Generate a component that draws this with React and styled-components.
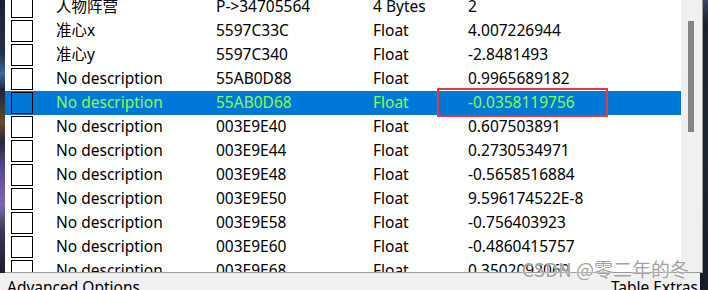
import React from "react";
import styled, { createGlobalStyle } from "styled-components";

const FONT = `"Noto Sans", "Noto Sans CJK SC", sans-serif`;

const Global = createGlobalStyle`
  html, body { margin: 0; padding: 0; background: #1b2232; }
  body { width: 708px; height: 290px; overflow: hidden; }
  #root { width: 708px; height: 290px; }
`;

const Screen = styled.div`
  position: relative;
  width: 708px;
  height: 290px;
  overflow: hidden;
  display: flex;
  font-family: ${FONT};
  background: linear-gradient(180deg, #2a3650 0%, #151c2a 30%, #1e2738 60%, #121826 100%);
`;

const Main = styled.div`
  width: 703px;
  display: flex;
  flex-direction: column;
`;

const TopRow = styled.div`
  height: 273px;
  display: flex;
`;

const LeftDesk = styled.div`
  width: 5px;
  background: linear-gradient(
    180deg,
    #1a2030 0%,
    #22324c 20%,
    #3d6a98 27%,
    #1c2436 33%,
    #6a4a30 45%,
    #2a2440 52%,
    #5b4b8c 62%,
    #7a6aa8 75%,
    #3a3458 85%,
    #1a1e2c 100%
  );
`;

const ListFrame = styled.div`
  width: 698px;
  display: flex;
  background: #fff;
  border-right: 1px solid #9a9a9a;
  border-bottom: 1px solid #9a9a9a;
  box-sizing: border-box;
  overflow: hidden;
`;

const Viewport = styled.div`
  width: 676px;
  overflow: hidden;
`;

const Rows = styled.div`
  margin-top: -5px;
`;

const Row = styled.div`
  position: relative;
  display: grid;
  grid-template-columns: 51px 160px 157px 95px 1fr;
  height: 24px;
  font-size: 15.5px;
  line-height: 22px;
  background: ${(p) => (p.$selected ? "#0078d7" : "transparent")};
  color: ${(p) => (p.$selected ? "#86ff48" : "#000")};
`;

const Check = styled.span`
  display: block;
  width: 22px;
  height: 22px;
  margin: 1px 0 0 6px;
  box-sizing: border-box;
  border: 1px solid #000;
`;

const Cell = styled.span`
  white-space: nowrap;
`;

const Callout = styled.span`
  position: absolute;
  left: 432px;
  top: -3px;
  width: 171px;
  height: 29px;
  box-sizing: border-box;
  border: 2px solid #e8383d;
  pointer-events: none;
`;

const Scrollbar = styled.div`
  width: 21px;
  background: #f0f0f0;
  padding: 21px 0 0 7px;
  box-sizing: border-box;
`;

const Thumb = styled.div`
  width: 6px;
  height: 111px;
  background: #858585;
`;

const BottomBar = styled.div`
  width: 700px;
  height: 17px;
  background: #f0f0f0;
  display: flex;
  justify-content: space-between;
  padding: 3px 2px 0 7px;
  box-sizing: border-box;
  overflow: hidden;
  font-size: 15.5px;
  line-height: 22px;
  color: #000;
  white-space: nowrap;
`;

const RightDesk = styled.div`
  flex: 1;
  background: linear-gradient(180deg, #3a4660 0%, #1a2232 8%, #1c2536 50%, #161d2b 100%);
`;

const Watermark = styled.div`
  position: absolute;
  left: 522px;
  top: 256px;
  font-family: "Noto Sans CJK SC", "Noto Sans", sans-serif;
  font-size: 19px;
  line-height: 26px;
  color: rgba(130, 130, 130, 0.75);
  text-shadow: 0 0 2px rgba(255, 255, 255, 0.9), 0 0 1px rgba(255, 255, 255, 0.9);
  white-space: nowrap;
  pointer-events: none;
`;

const rows = [
  ["人物阵营", "P->34705564", "4 Bytes", "2"],
  ["准心x", "5597C33C", "Float", "4.007226944"],
  ["准心y", "5597C340", "Float", "-2.8481493"],
  ["No description", "55AB0D88", "Float", "0.9965689182"],
  ["No description", "55AB0D68", "Float", "-0.0358119756", true],
  ["No description", "003E9E40", "Float", "0.607503891"],
  ["No description", "003E9E44", "Float", "0.2730534971"],
  ["No description", "003E9E48", "Float", "-0.5658516884"],
  ["No description", "003E9E50", "Float", "9.596174522E-8"],
  ["No description", "003E9E58", "Float", "-0.756403923"],
  ["No description", "003E9E60", "Float", "-0.4860415757"],
  ["No description", "003E9E68", "Float", "0.3502092069"],
];

export default function App() {
  return (
    <>
      <Global />
      <Screen>
        <Main>
          <TopRow>
            <LeftDesk />
            <ListFrame>
              <Viewport>
                <Rows>
                  {rows.map(([d, a, t, v, sel], i) => (
                    <Row key={i} $selected={sel}>
                      <Check />
                      <Cell>{d}</Cell>
                      <Cell>{a}</Cell>
                      <Cell>{t}</Cell>
                      <Cell>{v}</Cell>
                      {sel && <Callout />}
                    </Row>
                  ))}
                </Rows>
              </Viewport>
              <Scrollbar>
                <Thumb />
              </Scrollbar>
            </ListFrame>
          </TopRow>
          <BottomBar>
            <span>Advanced Options</span>
            <span>Table Extras</span>
          </BottomBar>
        </Main>
        <RightDesk />
        <Watermark>CSDN @零二年的冬</Watermark>
      </Screen>
    </>
  );
}
